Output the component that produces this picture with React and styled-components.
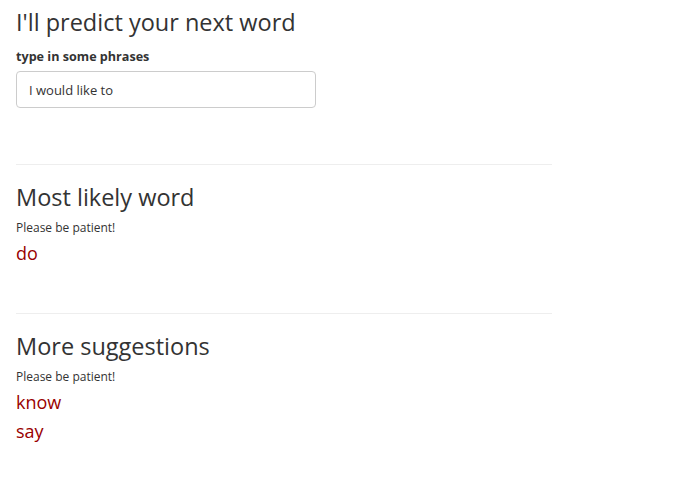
import React from 'react';
import styled, { createGlobalStyle } from 'styled-components';

const GlobalStyle = createGlobalStyle`
  body {
    margin: 0;
    background: #fff;
    font-family: "Open Sans", "Noto Sans", sans-serif;
    color: #333;
  }
`

const Page = styled.div`
  padding: 0 16px;
  width: 536px;
`

const Heading = styled.h3`
  font-size: 23.5px;
  font-weight: 400;
  line-height: 28px;
  margin: 8px 0 0;
  color: #333;
`

const Label = styled.label`
  display: block;
  font-size: 12.6px;
  font-weight: 700;
  margin: 12px 0 6px;
`

const Input = styled.input`
  box-sizing: border-box;
  width: 300px;
  height: 37px;
  padding: 0 12px;
  border: 1px solid #ccc;
  border-radius: 4px;
  font-family: inherit;
  font-size: 13px;
  color: #333;
  outline: none;
`

const Rule = styled.hr`
  border: 0;
  border-top: 1px solid #eee;
  margin: ${({ top }) => top}px 0 18px;
`

const Note = styled.div`
  font-size: 12px;
  margin-top: 9px;
  line-height: 16px;
`

const Word = styled.div`
  font-size: 18px;
  line-height: 29px;
  color: #990000;
  margin-top: ${({ first }) => (first ? 3 : 0)}px;
`

const Section = ({ title, words, top }) => (
  <>
    <Rule top={top} />
    <Heading>{title}</Heading>
    <Note>Please be patient!</Note>
    {words.map((w, i) => (
      <Word key={w} first={i === 0}>{w}</Word>
    ))}
  </>
)

const App = () => (
  <Page>
    <GlobalStyle />
    <Heading>I'll predict your next word</Heading>
    <Label>type in some phrases</Label>
    <Input defaultValue="I would like to" />
    <Section title="Most likely word" words={['do']} top={56} />
    <Section title="More suggestions" words={['know', 'say']} top={45} />
  </Page>
);

export default App;
